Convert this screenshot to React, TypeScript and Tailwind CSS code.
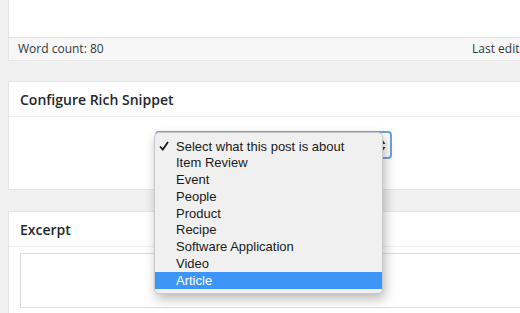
const options = [
  "Select what this post is about",
  "Item Review",
  "Event",
  "People",
  "Product",
  "Recipe",
  "Software Application",
  "Video",
  "Article",
];

export default function App() {
  return (
    <div className="relative h-[313px] w-[520px] overflow-hidden bg-[#f1f1f1] pl-2 font-['Open_Sans',sans-serif] text-[#32373c]">
      {/* Editor panel with status bar */}
      <div className="w-[540px] border-x border-b border-[#e5e5e5] bg-white">
        <div className="h-[37px]" />
        <div className="flex h-[23px] items-center border-t border-[#e5e5e5] bg-[#f7f7f7] pl-[9px] text-[12px]">
          <span className="w-[454px] shrink-0">Word count: 80</span>
          <span className="whitespace-nowrap">Last edited</span>
        </div>
      </div>

      {/* Configure Rich Snippet */}
      <div className="mt-5 h-[109px] w-[540px] border border-[#e5e5e5] bg-white">
        <div className="flex h-[35px] items-center border-b border-[#eeeeee] pl-[11px] text-[14px] font-semibold text-[#23282d]">
          Configure Rich Snippet
        </div>
        <div className="pl-[146px] pt-[14px]">
          <div className="flex h-[28px] w-[237px] items-center justify-end rounded-[4px] border-2 border-[#6ca4e0] bg-white pr-[4px]">
            <svg width="6" height="11" viewBox="0 0 6 11">
              <path d="M3 0.5 L5.5 4 L0.5 4 Z" fill="#333" />
              <path d="M3 10.5 L5.5 7 L0.5 7 Z" fill="#333" />
            </svg>
          </div>
        </div>
      </div>

      {/* Excerpt */}
      <div className="mt-[21px] h-[120px] w-[540px] border border-[#e5e5e5] bg-white">
        <div className="flex h-[35px] items-center border-b border-[#eeeeee] pl-[11px] text-[14px] font-semibold text-[#23282d]">
          Excerpt
        </div>
        <div className="ml-[11px] mt-[6px] h-[55px] border border-[#dddddd] bg-white" />
      </div>

      {/* Open select menu */}
      <div className="absolute left-[154px] top-[132px] w-[229px] rounded-[5px] border border-[#c8c8c8] bg-[#f0f0f0] pb-[4px] pt-[5px] font-['Liberation_Sans',sans-serif] text-[13px] text-[#1a1a1a] shadow-[2px_5px_12px_rgba(0,0,0,0.28)]">
        {options.map((opt, i) => {
          const active = opt === "Article";
          return (
            <div
              key={opt}
              className={`flex h-[16.75px] items-center ${active ? "bg-[#3d96f7] text-white" : ""}`}
            >
              <span className="flex w-[21px] pl-[4px]">
                {i === 0 && (
                  <svg width="10" height="10" viewBox="0 0 10 10">
                    <path d="M1 5.5 L3.8 8.5 L9 1" fill="none" stroke="#1a1a1a" strokeWidth="1.8" />
                  </svg>
                )}
              </span>
              <span>{opt}</span>
            </div>
          );
        })}
      </div>
    </div>
  );
}
